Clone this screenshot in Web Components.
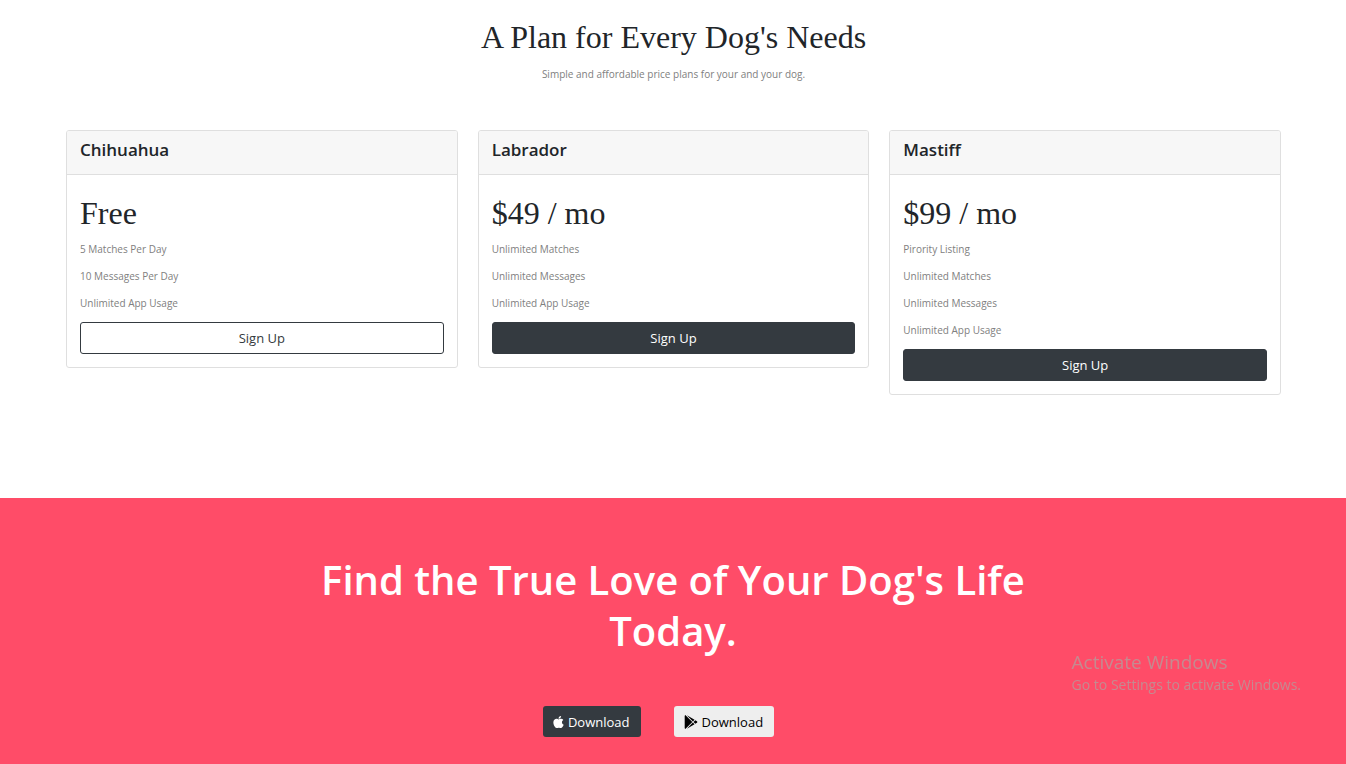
<!DOCTYPE html>
<html lang="en">
<head>
<meta charset="utf-8">
<meta name="viewport" content="width=device-width, initial-scale=1">
<title>TinDog</title>
<style>
body{margin:0;background:#fff;color:#212529;font-family:"Open Sans","Noto Sans",sans-serif;font-size:13px;line-height:20px}
</style>
</head>
<body>
<tin-pricing>
  <plan-card name="Chihuahua" price="Free" outline>
    <li>5 Matches Per Day</li><li>10 Messages Per Day</li><li>Unlimited App Usage</li>
  </plan-card>
  <plan-card name="Labrador" price="$49 / mo">
    <li>Unlimited Matches</li><li>Unlimited Messages</li><li>Unlimited App Usage</li>
  </plan-card>
  <plan-card name="Mastiff" price="$99 / mo">
    <li>Pirority Listing</li><li>Unlimited Matches</li><li>Unlimited Messages</li><li>Unlimited App Usage</li>
  </plan-card>
</tin-pricing>
<tin-cta>
  <store-button>
    <svg slot="icon" width="11" height="14" viewBox="0 0 384 512" fill="currentColor" aria-hidden="true"><path d="M318.700 268.700c-.2-36.700 16.400-64.400 50-84.800-18.800-26.900-47.200-41.700-84.700-44.600-35.500-2.800-74.300 20.700-88.500 20.700-15 0-49.400-19.700-76.400-19.700C63.300 141.200 4 184.800 4 273.500q0 39.300 14.400 81.200c12.800 36.700 59 126.700 107.200 125.200 25.200-.6 43-17.900 75.800-17.900 31.800 0 48.300 17.900 76.400 17.900 48.600-.7 90.400-82.500 102.600-119.300-65.200-30.700-61.700-90-61.700-91.900zm-56.600-164.200c27.300-32.400 24.800-61.900 24-72.500-24.100 1.400-52 16.400-67.900 34.900-17.500 19.800-27.800 44.300-25.600 71.900 26.100 2 49.900-11.400 69.500-34.300z"/></svg>
    Download
  </store-button>
  <store-button light>
    <svg slot="icon" width="14" height="14" viewBox="0 0 512 512" fill="currentColor" aria-hidden="true"><path d="M325.300 234.300L104.600 13l280.800 161.200-60.100 60.100zM47 0C34 6.800 25.300 19.200 25.300 35.300v441.300c0 16.100 8.700 28.500 21.700 35.300l256.600-256L47 0zm425.200 225.600l-58.900-34.100-65.700 64.500 65.700 64.500 60.100-34.100c18-14.300 18-46.500-1.200-60.800zM104.600 499l280.800-161.200-60.100-60.100L104.600 499z"/></svg>
    Download
  </store-button>
</tin-cta>
<windows-notice></windows-notice>

<script>
function define(name, markup, setup) {
  const template = document.createElement('template');
  template.innerHTML = markup;
  customElements.define(name, class extends HTMLElement {
    connectedCallback() {
      if (this.shadowRoot) return;
      this.attachShadow({ mode: 'open' }).append(template.content.cloneNode(true));
      if (setup) setup(this);
    }
  });
}

define('tin-pricing', `
<style>
:host{display:block;padding:17px 65px 103px 66px}
h2{margin:0;font:400 32px/40px "Liberation Serif",serif;text-align:center}
p{margin:9px 0 48px;font-size:10px;line-height:16px;text-align:center;color:#808080}
.plans{display:grid;grid-template-columns:repeat(3,1fr);gap:20px;align-items:start}
</style>
<h2>A Plan for Every Dog's Needs</h2>
<p>Simple and affordable price plans for your and your dog.</p>
<div class="plans"><slot></slot></div>`);

define('plan-card', `
<style>
:host{display:block;border:1px solid #dfdfdf;border-radius:3px;overflow:hidden}
h3{margin:0;padding:7px 13px 12px;font-size:17px;line-height:24px;font-weight:600;background:#f7f7f7;border-bottom:1px solid #dfdfdf}
.body{padding:18px 13px 13px}
h2{margin:0 0 8px;font:400 32px/40px "Liberation Serif",serif}
ul{margin:0;padding:0;list-style:none}
::slotted(li){margin-bottom:11px;font-size:10px;line-height:16px;color:#808080}
button{display:block;width:100%;height:32px;padding:0;border:1px solid #343a40;border-radius:3px;background:#343a40;color:#fff;font:inherit;cursor:pointer}
:host([outline]) button{background:#fff;color:#343a40}
</style>
<h3></h3>
<div class="body"><h2></h2><ul><slot></slot></ul><button type="button">Sign Up</button></div>`,
host => {
  host.shadowRoot.querySelector('h3').textContent = host.getAttribute('name');
  host.shadowRoot.querySelector('h2').textContent = host.getAttribute('price');
});

define('tin-cta', `
<style>
:host{display:block;padding:56px 66px 27px;background:#ff4c68;color:#fff}
h2{width:60%;margin:0 auto 50px;font-size:40px;line-height:51px;font-weight:600;text-align:center}
.stores{display:flex;justify-content:center;gap:33px;padding-right:29px}
</style>
<h2>Find the True Love of Your Dog's Life Today.</h2>
<div class="stores"><slot></slot></div>`);

define('store-button', `
<style>
:host{display:block}
button{display:flex;align-items:center;gap:4px;height:31px;padding:0 11px 0 10px;border:0;border-radius:3px;background:#343a40;color:#fff;font:inherit;cursor:pointer}
:host([light]) button{background:#eee;color:#000}
</style>
<button type="button"><slot name="icon"></slot><span><slot></slot></span></button>`);

define('windows-notice', `
<style>
:host{position:fixed;right:45px;bottom:68px;color:#c58a90;pointer-events:none}
p{margin:0;font-size:14px;line-height:22px}
.title{font-size:19px;line-height:24px}
</style>
<p class="title">Activate Windows</p>
<p>Go to Settings to activate Windows.</p>`);
</script>
</body>
</html>
